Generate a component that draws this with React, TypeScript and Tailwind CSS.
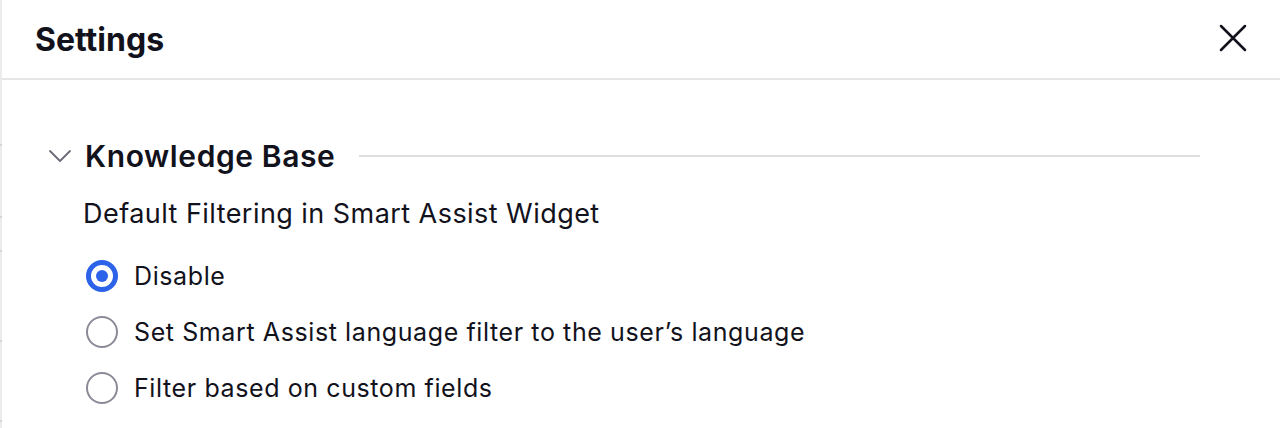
import React from "react";

function Radio({ checked }: { checked?: boolean }) {
  return checked ? (
    <span className="flex h-[32px] w-[32px] shrink-0 items-center justify-center rounded-full border-[5px] border-[#2d63e8] bg-white">
      <span className="h-[12px] w-[12px] rounded-full bg-[#2d63e8]" />
    </span>
  ) : (
    <span className="h-[32px] w-[32px] shrink-0 rounded-full border-2 border-[#8b8a96] bg-white" />
  );
}

export default function App() {
  const options = [
    { label: "Disable", checked: true },
    { label: "Set Smart Assist language filter to the user\u2019s language" },
    { label: "Filter based on custom fields" },
  ];
  return (
    <div
      className="relative h-[428px] w-[1280px] overflow-hidden bg-white text-[#12121c]"
      style={{ fontFamily: "Inter, 'Noto Sans', sans-serif" }}
    >
      <div className="absolute left-0 top-0 h-full w-[2px] bg-[#ececec]">
        <div className="absolute left-0 top-[144px] h-[2px] w-[2px] bg-[#d4d4d4]" />
        <div className="absolute left-0 top-[216px] h-[2px] w-[2px] bg-[#d4d4d4]" />
        <div className="absolute left-0 top-[250px] h-[2px] w-[2px] bg-[#d4d4d4]" />
        <div className="absolute left-0 top-[340px] h-[2px] w-[2px] bg-[#d4d4d4]" />
        <div className="absolute left-0 top-[420px] h-[2px] w-[2px] bg-[#d4d4d4]" />
      </div>
      <div className="ml-[2px] flex h-[80px] items-center justify-between border-b-2 border-[#e6e6e6] pl-[33px] pr-[30px]">
        <h1 className="pt-[2px] text-[32px] font-bold leading-[40px]">Settings</h1>
        <svg width="32" height="32" viewBox="0 0 24 24" fill="none" stroke="#12121c" strokeWidth="1.9" strokeLinecap="round" className="mr-[1px] mt-[-2px]">
          <path d="M3 3L21 21M21 3L3 21" />
        </svg>
      </div>
      <div className="ml-[2px] pl-[46px] pr-[80px] pt-[56px]">
        <div className="flex items-center">
          <svg width="24" height="24" viewBox="0 0 24 24" fill="none" stroke="#6b6b78" strokeWidth="1.8" strokeLinecap="round" strokeLinejoin="round" className="mr-[13px]">
            <path d="M2 7L12 17L22 7" />
          </svg>
          <h2 className="text-[30px] font-semibold leading-[40px] tracking-[0.6px]">Knowledge Base</h2>
          <div className="ml-[24px] h-[2px] flex-1 bg-[#dedede]" />
        </div>
        <div className="mt-[22px] pl-[35px] text-[27px] leading-[32px] tracking-[0.45px]">
          Default Filtering in Smart Assist Widget
        </div>
        <div className="mt-[30px] flex flex-col gap-[24px] pl-[38px]">
          {options.map((o) => (
            <div key={o.label} className="flex items-center gap-[16px]">
              <Radio checked={o.checked} />
              <span className="text-[25px] leading-[32px] tracking-[0.6px]">{o.label}</span>
            </div>
          ))}
        </div>
      </div>
    </div>
  );
}
